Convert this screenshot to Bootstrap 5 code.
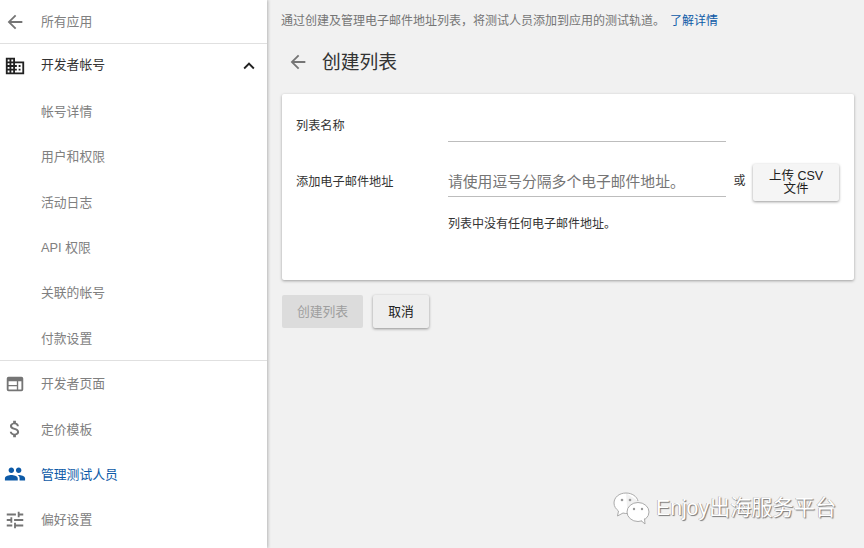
<!DOCTYPE html>
<html lang="zh">
<head>
<meta charset="utf-8">
<title>创建列表</title>
<link rel="stylesheet" href="https://cdn.jsdelivr.net/npm/bootstrap@5.3.0/dist/css/bootstrap.min.css">
<style>
html,body{height:100%;}
body{font-family:"Liberation Sans","Noto Sans CJK SC",sans-serif;font-size:12px;background:#f1f1f1;color:#333;overflow:hidden;}
.shell{height:548px;position:relative;}
.side{width:267px;flex:none;background:#fff;box-shadow:1px 0 3px rgba(0,0,0,.25);height:548px;z-index:2;}
.side-row{height:45.33px;color:#808080;font-size:12.8px;padding-left:41px;position:relative;text-decoration:none;}
.side-row svg{position:absolute;left:4px;top:50%;margin-top:-11px;width:22px;height:22px;fill:#757575;}
.row-back{height:43px;}
.row-head{height:44px;color:#333;padding-bottom:2px;}
.row-head svg{fill:#212121;}
.row-head svg.chev{left:auto;right:7px;}
.row-sub{padding-top:2px;}
.row-low{padding-top:1px;}
.row-last{padding-top:0;}
.row-sel{color:#0d5aa7;}
.row-sel svg{fill:#0d5aa7;}
.rule{height:1px;background:#e0e0e0;flex:none;}
.main-col{padding:0 10px 0 15px;min-width:0;}
.intro{height:40px;color:#757575;font-size:12px;padding-top:1px;margin-left:-1px;}
.intro a{color:#0d5aa7;text-decoration:none;margin-left:5px;}
.title-bar{height:46px;margin-bottom:8px;}
.title-bar svg{width:22px;height:22px;fill:#757575;margin:-3px 13px 0 5px;}
.title-bar h1{font-size:18.8px;font-weight:400;margin:1px 0 0;color:#333;}
.sheet{width:572px;height:186px;background:#fff;border-radius:2px;box-shadow:0 1px 3px rgba(0,0,0,.35);padding:0 15px 0 14px;}
.field-label{width:152px;flex:none;color:#333;font-size:12.2px;}
.line-input{width:278px;flex:none;border-bottom:1px solid #bdbdbd;}
.row-name{height:48px;}
.row-name .field-label{padding-top:23px;}
.row-mail{margin-top:22px;height:38px;}
.row-mail .field-label{padding-top:9px;}
.row-mail .line-input{height:33px;color:#757575;font-size:14.8px;line-height:37px;white-space:nowrap;}
.or-word{color:#333;font-size:12px;width:27px;text-align:center;padding-top:8px;}
.upload-btn{width:86px;height:37px;background:#f5f5f5;color:#212121;border:0;border-radius:2px;box-shadow:0 1px 3px rgba(0,0,0,.4);font-size:12.5px;line-height:13px;padding:0 8px;}
.empty-note{margin:13px 0 0 152px;color:#333;font-size:12px;}
.action-row{margin-top:15px;}
.btn-off{width:81px;height:33px;background:#dcdcdc;color:#9e9e9e;border:0;border-radius:2px;font-size:12.8px;padding:0;}
.btn-cancel{width:56px;height:33px;background:#eeeeee;color:#212121;border:0;border-radius:2px;box-shadow:0 1px 3px rgba(0,0,0,.4);font-size:12.8px;padding:0;margin-left:10px;}
.stamp{position:absolute;left:612px;top:490px;color:#fff;font-size:21.2px;line-height:36px;gap:6px;text-shadow:1px 1px 1px #777,-.5px 0 .5px #999;white-space:nowrap;z-index:3;}
.stamp svg{width:38px;height:36px;flex:none;}
</style>
</head>
<body>
<div class="shell d-flex">
  <nav class="side d-flex flex-column">
    <a class="side-row row-back d-flex align-items-center" href="#"><svg viewBox="0 0 24 24"><path d="M20 11H7.83l5.59-5.59L12 4l-8 8 8 8 1.41-1.41L7.83 13H20v-2z"/></svg>所有应用</a>
    <div class="rule"></div>
    <a class="side-row row-head d-flex align-items-center" href="#"><svg viewBox="0 0 24 24"><path d="M12 7V3H2v18h20V7H12zM6 19H4v-2h2v2zm0-4H4v-2h2v2zm0-4H4V9h2v2zm0-4H4V5h2v2zm4 12H8v-2h2v2zm0-4H8v-2h2v2zm0-4H8V9h2v2zm0-4H8V5h2v2zm10 12h-8v-2h2v-2h-2v-2h2v-2h-2V9h8v10zm-2-8h-2v2h2v-2zm0 4h-2v2h2v-2z"/></svg>开发者帐号<svg class="chev" viewBox="0 0 24 24"><path d="M12 8l-6 6 1.41 1.41L12 10.83l4.59 4.58L18 14z"/></svg></a>
    <a class="side-row row-sub d-flex align-items-center" href="#">帐号详情</a>
    <a class="side-row row-sub d-flex align-items-center" href="#">用户和权限</a>
    <a class="side-row row-sub d-flex align-items-center" href="#">活动日志</a>
    <a class="side-row row-sub d-flex align-items-center" href="#">API 权限</a>
    <a class="side-row row-sub d-flex align-items-center" href="#">关联的帐号</a>
    <a class="side-row row-sub d-flex align-items-center" href="#">付款设置</a>
    <div class="rule"></div>
    <a class="side-row d-flex align-items-center" href="#"><svg viewBox="0 0 24 24"><path fill-rule="evenodd" d="M5 4h14a2 2 0 0 1 2 2v12a2 2 0 0 1-2 2H5a2 2 0 0 1-2-2V6a2 2 0 0 1 2-2zm0 5v4h9V9zm0 5.500V18h9v-3.500zM15.500 9v9H19V9z"/></svg>开发者页面</a>
    <a class="side-row row-low d-flex align-items-center" href="#"><svg viewBox="0 0 24 24"><path d="M11.8 10.9c-2.27-.59-3-1.2-3-2.15 0-1.09 1.01-1.85 2.7-1.85 1.78 0 2.44.85 2.5 2.1h2.21c-.07-1.72-1.12-3.3-3.21-3.81V3h-3v2.16c-1.94.42-3.5 1.68-3.5 3.61 0 2.31 1.91 3.46 4.7 4.13 2.5.6 3 1.48 3 2.41 0 .69-.49 1.79-2.7 1.79-2.06 0-2.87-.92-2.98-2.1h-2.2c.12 2.19 1.76 3.42 3.68 3.83V21h3v-2.15c1.95-.37 3.5-1.5 3.5-3.55 0-2.84-2.43-3.81-4.7-4.4z"/></svg>定价模板</a>
    <a class="side-row row-low row-sel d-flex align-items-center" href="#"><svg viewBox="0 0 24 24"><path d="M16 11c1.66 0 2.99-1.34 2.99-3S17.66 5 16 5c-1.66 0-3 1.34-3 3s1.34 3 3 3zm-8 0c1.66 0 2.99-1.34 2.99-3S9.66 5 8 5C6.34 5 5 6.34 5 8s1.34 3 3 3zm0 2c-2.33 0-7 1.17-7 3.5V19h14v-2.5c0-2.33-4.67-3.5-7-3.5zm8 0c-.29 0-.62.02-.97.05 1.16.84 1.97 1.97 1.97 3.45V19h6v-2.5c0-2.33-4.67-3.5-7-3.5z"/></svg>管理测试人员</a>
    <a class="side-row row-last d-flex align-items-center" href="#"><svg viewBox="0 0 24 24"><path d="M3 17v2h6v-2H3zM3 5v2h10V5H3zm10 16v-2h8v-2h-8v-2h-2v6h2zM7 9v2H3v2h4v2h2V9H7zm14 4v-2H11v2h10zm-6-4h2V7h4V5h-4V3h-2v6z"/></svg>偏好设置</a>
  </nav>
  <main class="main-col flex-grow-1">
    <div class="intro d-flex align-items-center">通过创建及管理电子邮件地址列表，将测试人员添加到应用的测试轨道。<a href="#">了解详情</a></div>
    <div class="title-bar d-flex align-items-center">
      <svg viewBox="0 0 24 24"><path d="M20 11H7.83l5.59-5.59L12 4l-8 8 8 8 1.41-1.41L7.83 13H20v-2z"/></svg>
      <h1>创建列表</h1>
    </div>
    <section class="sheet">
      <div class="row-name d-flex">
        <div class="field-label">列表名称</div>
        <div class="line-input"></div>
      </div>
      <div class="row-mail d-flex">
        <div class="field-label">添加电子邮件地址</div>
        <div class="line-input">请使用逗号分隔多个电子邮件地址。</div>
        <div class="or-word">或</div>
        <button class="upload-btn" type="button">上传 CSV 文件</button>
      </div>
      <div class="empty-note">列表中没有任何电子邮件地址。</div>
    </section>
    <div class="action-row d-flex">
      <button class="btn-off" type="button" disabled>创建列表</button>
      <button class="btn-cancel" type="button">取消</button>
    </div>
  </main>
  <div class="stamp d-flex align-items-center">
    <svg viewBox="0 0 38 36"><path d="M14 3C7 3 2 7.500 2 13c0 3.500 2 6 4.500 8L5.500 26l5.500-3c1.500.4 3 .6 4.500.5" fill="#fff" stroke="#aaa"/><circle cx="10" cy="10" r="1.300" fill="#999"/><circle cx="18" cy="10" r="1.300" fill="#999"/><path d="M14 3c6 0 11 3.500 12 8" fill="#fff" stroke="#aaa"/><ellipse cx="26" cy="22" rx="11" ry="9.500" fill="#fff" stroke="#aaa"/><path d="M29 30.500l4 3.500-.5-5.500" fill="#fff" stroke="#aaa"/><circle cx="22" cy="19" r="1.200" fill="#999"/><circle cx="30" cy="19" r="1.200" fill="#999"/></svg>
    <span>Enjoy出海服务平台</span>
  </div>
</div>
<script src="https://cdn.jsdelivr.net/npm/bootstrap@5.3.0/dist/js/bootstrap.bundle.min.js"></script>
</body>
</html>
